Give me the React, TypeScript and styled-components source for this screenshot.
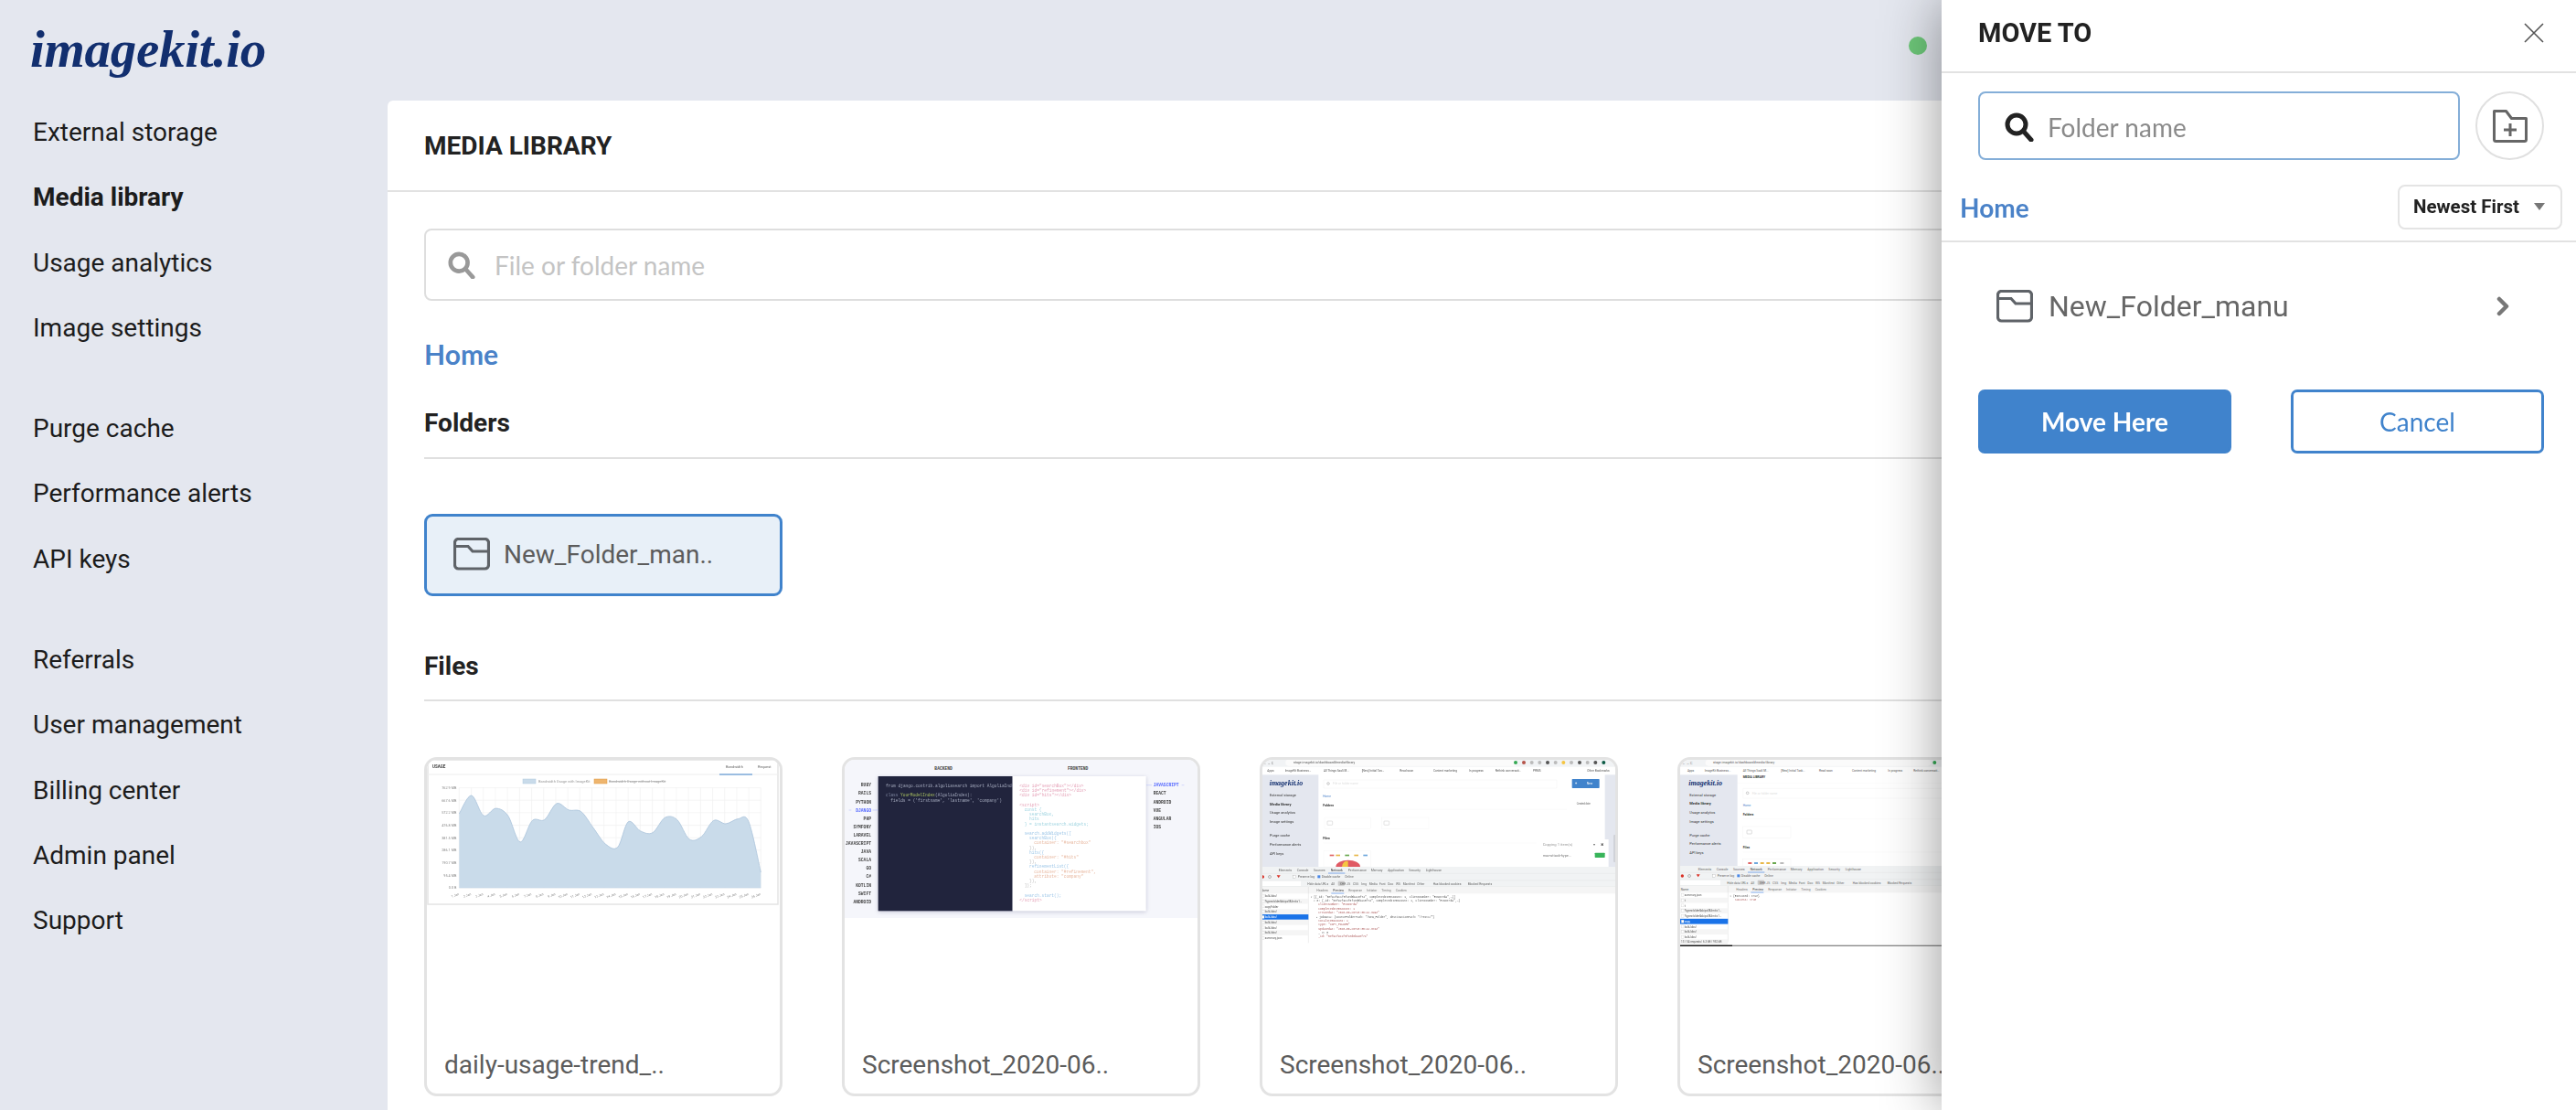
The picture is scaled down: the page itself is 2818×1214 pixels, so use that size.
import React from "react";
import styled, { createGlobalStyle } from "styled-components";

const Global = createGlobalStyle`
  html, body { margin: 0; padding: 0; height: 1214px; overflow: hidden; background: #e4e7ef; }
  * { box-sizing: border-box; }
  body { font-family: Roboto, "Liberation Sans", sans-serif; color: #222; }
`;

const Page = styled.div`
  position: relative;
  display: flex;
  width: 2818px;
  height: 1214px;
  overflow: hidden;
  background: #e4e7ef;
`;
const Sidebar = styled.aside`
  flex: 0 0 424px;
  padding-left: 36px;
`;
const Logo = styled.div`
  height: 109px;
  padding-top: 19px;
  margin-left: -3px;
  font-family: "Liberation Serif", serif;
  font-style: italic;
  font-weight: 700;
  font-size: 57px;
  line-height: 70px;
  letter-spacing: -0.3px;
  color: #122f6f;
`;
const NavGroup = styled.nav`
  margin-bottom: 38.5px;
`;
const NavItem = styled.div<{ $active?: boolean }>`
  height: 71.4px;
  line-height: 71.4px;
  font-size: 28px;
  font-weight: ${(p) => (p.$active ? 700 : 400)};
  color: #1c1c1c;
`;
const Main = styled.main`
  flex: 1;
  padding-top: 110px;
  min-width: 0;
`;
const Card = styled.section`
  background: #fff;
  border-radius: 6px 0 0 0;
  height: 1104px;
  overflow: hidden;
`;
const CardHeader = styled.header`
  height: 100px;
  padding-left: 40px;
  border-bottom: 2px solid #e2e2e2;
  display: flex;
  align-items: center;
  font-weight: 700;
  font-size: 28px;
  color: #222;
`;
const CardBody = styled.div`
  padding: 40px 40px 0;
`;
const SearchBox = styled.div`
  height: 79px;
  border: 2px solid #dedede;
  border-radius: 8px;
  display: flex;
  align-items: center;
  padding-left: 24px;
  gap: 21px;
  font-family: Lato, sans-serif;
  font-size: 28px;
  color: #c4c4c4;
`;
const Crumb = styled.div<{ $size: number }>`
  font-family: Lato, sans-serif;
  font-weight: 700;
  font-size: ${(p) => p.$size}px;
  color: #4a82c8;
`;
const MainCrumb = styled(Crumb)`
  margin-top: 39px;
  height: 38px;
  line-height: 38px;
`;
const SectionTitle = styled.h2<{ $top: number }>`
  margin: ${(p) => p.$top}px 0 0;
  height: 36px;
  line-height: 36px;
  font-weight: 700;
  font-size: 28px;
  color: #222;
`;
const Rule = styled.div<{ $top: number }>`
  margin-top: ${(p) => p.$top}px;
  height: 2px;
  background: #e0e0e0;
`;
const FolderTile = styled.div`
  margin-top: 60px;
  width: 392px;
  height: 90px;
  border: 3px solid #4083cc;
  border-radius: 9px;
  background: #e8f0f8;
  display: flex;
  align-items: center;
  padding: 0 0 2px 29px;
  gap: 15px;
  font-size: 28px;
  color: #5c5c5c;
`;
const FileGrid = styled.div`
  margin-top: 61px;
  display: grid;
  grid-template-columns: repeat(5, 392px);
  column-gap: 65px;
`;
const FileCard = styled.article`
  height: 371px;
  border: 3px solid #e3e3e3;
  border-radius: 14px;
  overflow: hidden;
  position: relative;
  background: #fff;
`;
const Thumb = styled.svg`
  display: block;
  width: 386px;
  filter: blur(0.4px);
`;
const FileName = styled.div`
  position: absolute;
  left: 19px;
  bottom: 13px;
  font-size: 28px;
  line-height: 36px;
  color: #5c5c5c;
  white-space: nowrap;
`;
const StatusDot = styled.div`
  position: absolute;
  left: 2088px;
  top: 40px;
  width: 20px;
  height: 20px;
  border-radius: 50%;
  background: #6ec87a;
`;
const Panel = styled.aside`
  position: absolute;
  top: 0;
  right: 0;
  bottom: 0;
  width: 694px;
  background: #fff;
  box-shadow: 0 0 60px rgba(0, 0, 0, 0.42);
`;
const PanelHeader = styled.header`
  height: 80px;
  padding: 0 34px 6px 40px;
  border-bottom: 2px solid #e2e2e2;
  display: flex;
  align-items: center;
  justify-content: space-between;
  font-weight: 700;
  font-size: 29px;
  color: #222;
`;
const PanelSearchRow = styled.div`
  display: flex;
  gap: 17px;
  padding: 20px 35px 0 40px;
`;
const PanelSearch = styled.div`
  flex: 1;
  height: 75px;
  border: 2px solid #84aed8;
  border-radius: 8px;
  display: flex;
  align-items: center;
  padding: 2px 0 0 27px;
  gap: 15px;
  font-family: Lato, sans-serif;
  font-size: 28px;
  color: #8a8a8a;
`;
const CircleButton = styled.div`
  flex: 0 0 75px;
  height: 75px;
  border: 2px solid #e0e0e0;
  border-radius: 50%;
  display: flex;
  align-items: center;
  justify-content: center;
`;
const PanelToolbar = styled.div`
  height: 90px;
  padding: 27px 15px 13px 20px;
  border-bottom: 2px solid #e2e2e2;
  display: flex;
  align-items: center;
  justify-content: space-between;
`;
const PanelCrumb = styled(Crumb)`
  padding-top: 2px;
`;
const SortSelect = styled.div`
  width: 180px;
  height: 49px;
  border: 2px solid #e4e4e4;
  border-radius: 8px;
  display: flex;
  align-items: center;
  justify-content: space-between;
  padding: 0 17px 0 15px;
  font-size: 20.500px;
  font-weight: 700;
  color: #222;
`;
const Caret = styled.span`
  width: 0;
  height: 0;
  border-left: 6px solid transparent;
  border-right: 6px solid transparent;
  border-top: 8px solid #777;
`;
const FolderRow = styled.div`
  height: 140px;
  padding: 0 73px 0 60px;
  display: flex;
  align-items: center;
  gap: 17px;
  font-size: 32px;
  color: #666;
`;
const FolderLabel = styled.span`
  flex: 1;
`;
const ButtonRow = styled.div`
  display: flex;
  justify-content: space-between;
  padding: 21px 35px 0 40px;
`;
const Button = styled.div<{ $primary?: boolean }>`
  width: 277px;
  height: 70px;
  border-radius: 7px;
  border: 3px solid #4083cc;
  background: ${(p) => (p.$primary ? "#4083cc" : "#fff")};
  color: ${(p) => (p.$primary ? "#fff" : "#4083cc")};
  font-family: Lato, sans-serif;
  font-size: 28px;
  font-weight: ${(p) => (p.$primary ? 700 : 400)};
  display: flex;
  align-items: center;
  justify-content: center;
`;

const FolderIcon = () => (
  <svg width="40" height="36" viewBox="0 0 40 36" fill="none" stroke="#5f6368" strokeWidth="3.200">
    <path d="M1.500 6a4 4 0 0 1 4-4.500h29a4 4 0 0 1 4 4.500v24a4 4 0 0 1-4 4h-29a4 4 0 0 1-4-4z" />
    <path d="M1.500 9.500H16l5 5.500h17.500" />
  </svg>
);
const SearchIcon = ({ color, size }: { color: string; size: number }) => (
  <svg width={size} height={size} viewBox="0 0 32 32" fill="none" stroke={color}>
    <circle cx="13" cy="13" r="10" strokeWidth="5" />
    <path d="M20.500 20.500L29 30" strokeWidth="5" strokeLinecap="round" />
  </svg>
);
const NewFolderIcon = () => (
  <svg width="38" height="36" viewBox="0 0 38 36" fill="none" stroke="#666" strokeWidth="3">
    <path d="M1.500 1.500h13l6 8h16v23a2 2 0 0 1-2 2h-31a2 2 0 0 1-2-2z" strokeLinejoin="round" />
    <path d="M19 15v14M12 22h14" />
  </svg>
);
const CloseIcon = () => (
  <svg width="24" height="24" viewBox="0 0 24 24" stroke="#555" strokeWidth="1.600">
    <path d="M2 2l20 20M22 2L2 22" />
  </svg>
);
const ChevronIcon = () => (
  <svg width="14" height="22" viewBox="0 0 14 22" fill="none" stroke="#777" strokeWidth="4.500" strokeLinecap="round" strokeLinejoin="round">
    <path d="M3 3l8 8-8 8" />
  </svg>
);

type Txt = [number, number, string, number?, string?, number?];
const Texts = ({ items, family = "Roboto, sans-serif", anchor }: { items: Txt[]; family?: string; anchor?: "end" }) => (
  <>
    {items.map(([x, y, t, s = 11, c = "#555", w = 400], i) => (
      <text key={i} x={x} y={y} fontSize={s} fill={c} fontWeight={w} fontFamily={family} textAnchor={anchor}>
        {t}
      </text>
    ))}
  </>
);

const chartPts: [number, number][] = [
  [250, 835], [290, 790], [330, 840], [370, 822], [410, 840], [450, 905], [490, 852], [530, 850], [570, 810],
  [610, 826], [650, 830], [690, 870], [730, 910], [770, 918], [805, 855], [845, 878], [885, 882], [925, 845],
  [965, 850], [1005, 898], [1045, 892], [1085, 852], [1125, 860], [1165, 848], [1200, 855], [1240, 980],
].map(([x, y]) => [x / 3 - 48, y / 2.26 - 310.6]);

function smooth(pts: [number, number][]) {
  let d = `M${pts[0][0]} ${pts[0][1]}`;
  for (let i = 0; i < pts.length - 1; i++) {
    const p0 = pts[Math.max(i - 1, 0)];
    const p1 = pts[i];
    const p2 = pts[i + 1];
    const p3 = pts[Math.min(i + 2, pts.length - 1)];
    d += `C${p1[0] + (p2[0] - p0[0]) / 6} ${p1[1] + (p2[1] - p0[1]) / 6} ${p2[0] - (p3[0] - p1[0]) / 6} ${p2[1] - (p3[1] - p1[1]) / 6} ${p2[0]} ${p2[1]}`;
  }
  return d;
}

const ChartThumb = () => {
  const line = smooth(chartPts);
  const base = 1018 / 2.26 - 310.6;
  const left = chartPts[0][0];
  const right = chartPts[chartPts.length - 1][0];
  const yLabels = ["762.9 MB", "667.6 MB", "572.2 MB", "476.8 MB", "381.5 MB", "286.1 MB", "190.7 MB", "95.4 MB", "0.0 B"];
  const top = 771 / 2.26 - 310.6;
  const step = (base - top) / 8;
  const xStep = (right - left) / 25;
  return (
    <Thumb viewBox="0 0 386 160" height="160">
      <rect x="0" y="0" width="386" height="160" fill="#fff" />
      <rect x="1" y="0" width="383" height="158" fill="#fff" stroke="#e4e4e4" strokeWidth="1.500" />
      <path d="M1 16h383" stroke="#eee" />
      <text x="6" y="9" fontSize="4.500" fontWeight="700" fill="#444" fontFamily="Roboto">USAGE</text>
      <text x="327" y="9" fontSize="4" fill="#666" fontFamily="Roboto">Bandwidth</text>
      <text x="362" y="9" fontSize="4" fill="#666" fontFamily="Roboto">Request</text>
      <path d="M320 16h36" stroke="#4083cc" />
      <rect x="105" y="21" width="14" height="5" fill="#c9dbea" stroke="#b2cbe0" strokeWidth=".5" />
      <text x="122" y="25" fontSize="4" fill="#999" fontFamily="Roboto">Bandwidth Usage with ImageKit</text>
      <rect x="183" y="21" width="14" height="5" fill="#eeb56e" stroke="#e09a44" strokeWidth=".5" />
      <text x="199" y="25" fontSize="4" fill="#999" fontFamily="Roboto" textDecoration="line-through">Bandwidth Usage without ImageKit</text>
      {yLabels.map((l, i) => (
        <g key={l}>
          <text x={left - 3} y={top + i * step + 1.500} fontSize="3.800" fill="#888" textAnchor="end" fontFamily="Roboto">{l}</text>
          <path d={`M${left} ${top + i * step}H${right}`} stroke="#f0f0f0" strokeWidth=".7" />
        </g>
      ))}
      {chartPts.map((_, i) => (
        <g key={i}>
          <path d={`M${left + i * xStep} ${top}V${base}`} stroke="#f0f0f0" strokeWidth=".7" />
          <text
            transform={`translate(${left + i * xStep} ${base + 8}) rotate(-20)`}
            fontSize="3.500"
            fill="#888"
            textAnchor="end"
            fontFamily="Roboto"
          >
            {i + 1} Jan
          </text>
        </g>
      ))}
      <path d={`${line}L${right} ${base}L${left} ${base}Z`} fill="#c9dbea" />
      <path d={line} fill="none" stroke="#a9c3da" strokeWidth=".8" />
      <path d={`M${left} ${base}H${right}`} stroke="#b9cfe2" strokeWidth=".7" />
    </Thumb>
  );
};

const leftLangs = ["RUBY", "RAILS", "PYTHON", "DJANGO", "PHP", "SYMFONY", "LARAVEL", "JAVASCRIPT", "JAVA", "SCALA", "GO", "C#", "KOTLIN", "SWIFT", "ANDROID"];
const rightLangs = ["JAVASCRIPT", "REACT", "ANDROID", "VUE", "ANGULAR", "IOS"];
const frontCode: Txt[] = [
  [642, 176, '<div id="searchBox"></div>', 13.5, "#e5a2b8"],
  [642, 191, '<div id="refinement"></div>', 13.5, "#e5a2b8"],
  [642, 207, '<div id="hits"></div>', 13.5, "#e5a2b8"],
  [642, 238, "<script>", 13.5, "#e5a2b8"],
  [658, 254, "const {", 13.5, "#9fd4e0"],
  [674, 270, "searchBox,", 13.5, "#9fd4e0"],
  [674, 285, "hits", 13.5, "#9fd4e0"],
  [658, 301, "} = instantsearch.widgets;", 13.5, "#9fd4e0"],
  [658, 332, "search.addWidgets([", 13.5, "#a0c8e8"],
  [674, 347, "searchBox({", 13.5, "#a0c8e8"],
  [690, 363, 'container: "#searchbox"', 13.5, "#e8b8a0"],
  [674, 379, "}),", 13.5, "#bbb"],
  [674, 394, "hits({", 13.5, "#a0c8e8"],
  [690, 410, 'container: "#hits"', 13.5, "#e8b8a0"],
  [674, 425, "}),", 13.5, "#bbb"],
  [674, 441, "refinementList({", 13.5, "#a0c8e8"],
  [690, 457, 'container: "#refinement",', 13.5, "#e8b8a0"],
  [690, 472, 'attribute: "company"', 13.5, "#e8b8a0"],
  [674, 488, "}),", 13.5, "#bbb"],
  [658, 503, "]);", 13.5, "#bbb"],
  [658, 535, "search.start();", 13.5, "#a0c8e8"],
  [642, 550, "</script>", 13.5, "#e5a2b8"],
];

const CodeThumb = () => (
  <Thumb viewBox="68 86 1158 519" height="173">
    <rect x="60" y="80" width="1180" height="530" fill="#f5f6fb" />
    <Texts family="Liberation Mono, monospace" items={[[363, 120, "BACKEND", 14, "#444", 700], [800, 120, "FRONTEND", 14, "#444", 700]]} />
    <g style={{ filter: "drop-shadow(0 3px 6px rgba(60,60,110,.25))" }}>
      <rect x="178" y="140" width="441" height="442" fill="#21243d" />
      <rect x="619" y="140" width="438" height="442" fill="#fff" />
    </g>
    <Texts
      family="Liberation Mono, monospace"
      anchor="end"
      items={leftLangs.map((l, i) => [155, 174 + i * 27.300, l, 14, l === "DJANGO" ? "#5468ff" : "#444", 700] as Txt)}
    />
    <path d="M82 251h8M160 251h18" stroke="#8f9bff" strokeWidth="1" />
    <Texts
      family="Liberation Mono, monospace"
      items={rightLangs.map((l, i) => [1081, 174 + i * 27.300, l, 14, l === "JAVASCRIPT" ? "#5468ff" : "#444", 700] as Txt)}
    />
    <path d="M1058 169h18M1174 169h8" stroke="#8f9bff" strokeWidth="1" />
    <clipPath id="dark">
      <rect x="178" y="140" width="441" height="442" />
    </clipPath>
    <g clipPath="url(#dark)">
      <Texts
        family="Liberation Mono, monospace"
        items={[
          [203, 176, "from django.contrib.algoliasearch import AlgoliaIndex", 13.5, "#a4aabd"],
          [203, 207, "class", 13.5, "#7f86a0"],
          [251, 207, "YourModelIndex", 13.5, "#a8c060"],
          [365, 207, "(AlgoliaIndex):", 13.5, "#a4aabd"],
          [219, 223, "fields = ('firstname', 'lastname', 'company')", 13.5, "#a4aabd"],
        ]}
      />
    </g>
    <Texts family="Liberation Mono, monospace" items={frontCode} />
  </Thumb>
);

const navItems = ["External storage", "Media library", "Usage analytics", "Image settings", "Purge cache", "Performance alerts", "API keys"];
const dtTabs = ["Elements", "Console", "Sources", "Network", "Performance", "Memory", "Application", "Security", "Lighthouse"];
const dtTabX = [117, 177, 232, 288, 345, 420, 476, 545, 600];
const filterItems: [number, string][] = [
  [212, "Hide data URLs"], [290, "All"], [318, "XHR"], [341, "JS"], [361, "CSS"], [389, "Img"], [414, "Media"], [448, "Font"],
  [476, "Doc"], [502, "WS"], [525, "Manifest"], [572, "Other"], [624, "Has blocked cookies"], [738, "Blocked Requests"],
];
const subTabs: [number, string][] = [[242, "Headers"], [296, "Preview"], [347, "Response"], [406, "Initiator"], [455, "Timing"], [501, "Cookies"]];

const DevTools = ({ dx, dy }: { dx: number; dy: number }) => (
  <g transform={`translate(${dx} ${dy})`}>
    <rect x="55" y="440" width="1180" height="66" fill="#f1f3f4" />
    <path d="M55 462h1180M55 484h1180M55 506h1180" stroke="#ddd" />
    <Texts items={dtTabs.map((t, i) => [dtTabX[i], 455, t, 10.500, i === 3 ? "#333" : "#666"] as Txt)} />
    <path d="M280 461h55" stroke="#4a88e8" strokeWidth="2" />
    <circle cx="65" cy="473" r="5" fill="#d93025" />
    <circle cx="88" cy="473" r="4.500" fill="none" stroke="#777" strokeWidth="1.500" />
    <path d="M111 468h12l-6 9z" fill="#d93025" />
    <Texts
      items={[
        [180, 477, "Preserve log", 10, "#666"],
        [258, 477, "Disable cache", 10, "#666"],
        [335, 477, "Online", 10, "#666"],
        [62, 499, "Filter", 9, "#aaa"],
      ]}
    />
    <rect x="165" y="468" width="9" height="9" fill="#fff" stroke="#aaa" />
    <rect x="245" y="468" width="9" height="9" fill="#4a88e8" />
    <rect x="55" y="487" width="135" height="16" fill="#fff" />
    <rect x="312" y="487" width="22" height="15" rx="3" fill="#c9c9c9" />
    <Texts items={filterItems.map(([x, t]) => [x, 499, t, 10, "#666"] as Txt)} />
    <rect x="55" y="506" width="1180" height="22" fill="#f5f5f5" />
    <text x="60" y="520" fontSize="9.500" fill="#555" fontFamily="Roboto">Name</text>
    <Texts items={subTabs.map(([x, t]) => [x, 520, t, 10, t === "Preview" ? "#333" : "#777"] as Txt)} />
    <path d="M290 527h42" stroke="#4a88e8" strokeWidth="2" />
  </g>
);

const RequestList = ({ dx, dy, names, sel }: { dx: number; dy: number; names: string[]; sel: number }) => (
  <g transform={`translate(${dx} ${dy})`}>
    <path d="M215 506v184" stroke="#ccc" />
    {names.map((n, i) => {
      const y = 527 + i * 17.300;
      return (
        <g key={i}>
          {i === sel && <rect x="55" y={y} width="160" height="17.300" fill="#1a73e8" />}
          {i % 2 === 1 && i !== sel && <rect x="55" y={y} width="160" height="17.300" fill="#f5f5f5" />}
          <rect x="62" y={y + 4} width="8" height="9" fill="#fff" stroke="#ccc" />
          <text x="72" y={y + 12} fontSize="9" fill={i === sel ? "#fff" : "#555"} fontFamily="Roboto">{n}</text>
        </g>
      );
    })}
  </g>
);

const BrowserThumbA = () => (
  <Thumb viewBox="64 89 1158 612" height="204">
    <rect x="55" y="80" width="1180" height="620" fill="#fff" />
    <rect x="55" y="80" width="1180" height="32" fill="#f1f3f5" />
    <rect x="140" y="88" width="760" height="21" rx="10" fill="#fbfbfb" />
    <Texts
      items={[
        [66, 103, "← → C", 11, "#777"],
        [166, 102, "stage.imagekit.io/dashboard#media-library", 10.500, "#555"],
        [80, 128, "Apps", 9.500], [138, 128, "ImageKit Business...", 9.500], [265, 128, "All Things SaaS M...", 9.500],
        [390, 128, "[New] Initial Tas...", 9.500], [515, 128, "Read soon", 9.500], [625, 128, "Content marketing", 9.500],
        [742, 128, "In progress", 9.500], [828, 128, "Rethink conversati...", 9.500], [952, 128, "PRMS", 9.500],
        [1130, 128, "Other Bookmarks", 9.500],
      ]}
    />
    {[[895, "#34a853"], [922, "#b5544a"], [948, "#bbb"], [974, "#bbb"], [1000, "#555"], [1026, "#bbb"], [1052, "#f5c542"], [1078, "#bbb"], [1105, "#555"], [1131, "#bbb"], [1157, "#555"], [1184, "#0d5c46"]].map(([x, c]) => (
      <circle key={x} cx={x as number} cy="98" r="6" fill={c as string} />
    ))}
    <rect x="55" y="138" width="193" height="302" fill="#e4e7ef" />
    <rect x="1188" y="138" width="47" height="302" fill="#e4e7ef" />
    <text x="87" y="173" fontFamily="Liberation Serif" fontStyle="italic" fontWeight="700" fontSize="24" fill="#122f6f">imagekit.io</text>
    {navItems.map((n, i) => (
      <text key={n} x="88" y={[208, 238, 267, 297, 342, 371, 401][i]} fontSize="12" fontWeight={i === 1 ? 700 : 400} fill="#333" fontFamily="Roboto">{n}</text>
    ))}
    <rect x="265" y="155" width="765" height="27" fill="#fff" stroke="#eee" />
    <circle cx="280" cy="167" r="4" fill="none" stroke="#999" strokeWidth="1.500" />
    <rect x="1080" y="152" width="90" height="30" rx="2" fill="#4083cc" />
    <Texts
      items={[
        [295, 171, "File or folder name", 10, "#ddd"],
        [1090, 171, "+", 12, "#fff", 700],
        [1128, 171, "New", 10, "#fff"],
        [263, 212, "Home", 9.500, "#4a82c8"],
        [263, 243, "Folders", 10.500, "#333", 700],
        [1095, 237, "Created date", 8, "#666"],
        [263, 351, "Files", 10.500, "#333", 700],
        [302, 300, "Test1", 10, "#aaa"],
        [487, 300, "New_Folder", 10, "#aaa"],
      ]}
    />
    <rect x="268" y="278" width="152" height="37" fill="#fff" stroke="#f0f0f0" />
    <rect x="455" y="278" width="155" height="37" fill="#fff" stroke="#f0f0f0" />
    <rect x="277" y="290" width="17" height="13" rx="2" fill="none" stroke="#aaa" />
    <rect x="463" y="290" width="17" height="13" rx="2" fill="none" stroke="#aaa" />
    <path d="M263 252h800M263 362h700" stroke="#f2f2f2" />
    <rect x="265" y="388" width="155" height="52" fill="#fff" stroke="#f0f0f0" />
    <path d="M305 440a40 22 0 0 1 80 0z" fill="#e05a64" />
    <path d="M325 440a16 20 0 0 1 20 -18v18z" fill="#f5c542" />
    {[285, 305, 335, 365, 395].map((x, i) => (
      <rect key={x} x={x} y="400" width="14" height="5" fill={["#e06666", "#e8b84a", "#6aa84f", "#e8b84a", "#6fa8dc"][i]} />
    ))}
    <rect x="968" y="350" width="232" height="90" fill="#fff" />
    <Texts
      items={[
        [984, 372, "Copying 1 item(s)", 12.500, "#999"],
        [984, 406, "max-attack-hype...", 11.500, "#777"],
        [1150, 372, "▾", 12, "#666"],
        [1174, 372, "✖", 11, "#444"],
      ]}
    />
    <rect x="1155" y="394" width="33" height="16" rx="2" fill="#38b45a" />
    <rect x="1216" y="335" width="8" height="90" rx="3" fill="#d0d2d8" />
    <DevTools dx={0} dy={0} />
    <RequestList
      dx={0}
      dy={0}
      sel={4}
      names={["bulkJobs/", "?type=folder&skip=0&limit=1...", "copyFolder", "bulkJobs/", "bulkJobs/", "bulkJobs/", "bulkJobs/", "bulkJobs/", "summary.json"]}
    />
    <Texts
      family="Liberation Mono, monospace"
      items={[
        [222, 541, '▾ [{_id: "5ef92f9c1f5f1ed8ba18f74", completedItemsCount: 1, clientNumber: "ESNOtrdA",…}]', 9, "#555"],
        [232, 554, '▾ 0: {_id: "5ef92f9c1f5f1ed8ba18f74", completedItemsCount: 1, clientNumber: "ESNOtrdA",…}', 9, "#555"],
        [248, 567, 'clientNumber: "ESNOtrdA"', 9, "#a55"],
        [248, 580, "completedItemsCount: 1", 9, "#a55"],
        [248, 593, 'createdAt: "2020-06-26T18:30:44.349Z"', 9, "#a55"],
        [240, 607, '▸ jobData: {sourceFolderPath: "/New_Folder", destinationPath: "/Test1/"}', 9, "#555"],
        [248, 620, "totalItemsCount: 1", 9, "#a55"],
        [248, 633, 'type: "COPY_FOLDER"', 9, "#a55"],
        [248, 646, 'updatedAt: "2020-06-26T18:30:44.374Z"', 9, "#a55"],
        [248, 659, "__v: 0", 9, "#555"],
        [248, 672, '_id: "5ef92f9c1f5f1ed8ba18f74"', 9, "#a55"],
      ]}
    />
  </Thumb>
);

const BrowserThumbB = () => (
  <Thumb viewBox="82 89 1158 624" height="208">
    <rect x="73" y="80" width="1300" height="640" fill="#fff" />
    <rect x="73" y="80" width="1300" height="32" fill="#f1f3f5" />
    <rect x="165" y="88" width="740" height="21" rx="10" fill="#fbfbfb" />
    <Texts
      items={[
        [88, 103, "← → C", 11, "#777"],
        [190, 102, "stage.imagekit.io/dashboard#media-library", 10.500, "#555"],
        [106, 128, "Apps", 9.500], [162, 128, "ImageKit Business...", 9.500], [288, 128, "All Things SaaS M...", 9.500],
        [413, 128, "[New] Initial Task...", 9.500], [538, 128, "Read soon", 9.500], [646, 128, "Content marketing", 9.500],
        [764, 128, "In progress", 9.500], [848, 128, "Rethink conversati...", 9.500],
      ]}
    />
    <circle cx="917" cy="98" r="6" fill="#34a853" />
    <rect x="73" y="138" width="197" height="300" fill="#e4e7ef" />
    <text x="110" y="173" fontFamily="Liberation Serif" fontStyle="italic" fontWeight="700" fontSize="24" fill="#122f6f">imagekit.io</text>
    {navItems.map((n, i) => (
      <text key={n} x="113" y={[208, 237, 266, 296, 340, 369, 398][i]} fontSize="12" fontWeight={i === 1 ? 700 : 400} fill="#333" fontFamily="Roboto">{n}</text>
    ))}
    <Texts
      items={[
        [288, 149, "MEDIA LIBRARY", 10, "#333", 700],
        [318, 203, "File or folder name", 10, "#ddd"],
        [288, 243, "Home", 9.500, "#4a82c8"],
        [288, 273, "Folders", 10.500, "#333", 700],
        [323, 330, "New_Folder", 10, "#aaa"],
        [288, 380, "Files", 10.500, "#333", 700],
      ]}
    />
    <path d="M270 166h1000M288 283h900M288 392h900" stroke="#f2f2f2" />
    <rect x="288" y="183" width="900" height="32" rx="2" fill="none" stroke="#eee" />
    <circle cx="303" cy="198" r="4" fill="none" stroke="#999" strokeWidth="1.500" />
    <rect x="288" y="308" width="157" height="37" fill="#fff" stroke="#eee" />
    <rect x="301" y="320" width="16" height="12" rx="2" fill="none" stroke="#999" />
    <rect x="288" y="415" width="157" height="24" fill="#fff" stroke="#eee" />
    {[305, 325, 345, 365, 385, 410].map((x, i) => (
      <rect key={x} x={x} y="425" width="12" height="6" fill={["#e06666", "#6fa8dc", "#e8b84a", "#e8b84a", "#6aa84f", "#bbb"][i]} />
    ))}
    <DevTools dx={24} dy={-3} />
    <RequestList dx={24} dy={-3} sel={5} names={["summary.json", "t", "t", "?type=folder&skip=0&limit=1...", "?type=folder&skip=0&limit=1...", "copy", "bulkJobs/", "bulkJobs/", "bulkJobs/"]} />
    <rect x="78" y="678" width="160" height="18" fill="#f5f5f5" />
    <text x="85" y="690" fontSize="9" fill="#555" fontFamily="Roboto">13 / 54 requests | 6.3 kB / 952 kB</text>
    <Texts
      family="Liberation Mono, monospace"
      items={[
        [245, 538, "▾ {Executed: true}", 9, "#555"],
        [262, 551, "success: true", 9, "#a55"],
      ]}
    />
    <rect x="78" y="697" width="1300" height="5" fill="#888" />
    <rect x="78" y="697" width="175" height="5" fill="#111" />
  </Thumb>
);

const files = [
  { name: "daily-usage-trend_..", thumb: <ChartThumb /> },
  { name: "Screenshot_2020-06..", thumb: <CodeThumb /> },
  { name: "Screenshot_2020-06..", thumb: <BrowserThumbA /> },
  { name: "Screenshot_2020-06..", thumb: <BrowserThumbB /> },
];

export default function App() {
  return (
    <Page>
      <Global />
      <Sidebar>
        <Logo>imagekit.io</Logo>
        <NavGroup>
          <NavItem>External storage</NavItem>
          <NavItem $active>Media library</NavItem>
          <NavItem>Usage analytics</NavItem>
          <NavItem>Image settings</NavItem>
        </NavGroup>
        <NavGroup>
          <NavItem>Purge cache</NavItem>
          <NavItem>Performance alerts</NavItem>
          <NavItem>API keys</NavItem>
        </NavGroup>
        <NavGroup>
          <NavItem>Referrals</NavItem>
          <NavItem>User management</NavItem>
          <NavItem>Billing center</NavItem>
          <NavItem>Admin panel</NavItem>
          <NavItem>Support</NavItem>
        </NavGroup>
      </Sidebar>
      <Main>
        <Card>
          <CardHeader>MEDIA LIBRARY</CardHeader>
          <CardBody>
            <SearchBox>
              <SearchIcon color="#999" size={30} />
              File or folder name
            </SearchBox>
            <MainCrumb $size={30}>Home</MainCrumb>
            <SectionTitle $top={39}>Folders</SectionTitle>
            <Rule $top={19} />
            <FolderTile>
              <FolderIcon />
              New_Folder_man..
            </FolderTile>
            <SectionTitle $top={59}>Files</SectionTitle>
            <Rule $top={18} />
            <FileGrid>
              {files.map((f, i) => (
                <FileCard key={i}>
                  {f.thumb}
                  <FileName>{f.name}</FileName>
                </FileCard>
              ))}
            </FileGrid>
          </CardBody>
        </Card>
      </Main>
      <StatusDot />
      <Panel>
        <PanelHeader>
          MOVE TO
          <CloseIcon />
        </PanelHeader>
        <PanelSearchRow>
          <PanelSearch>
            <SearchIcon color="#222" size={32} />
            Folder name
          </PanelSearch>
          <CircleButton>
            <NewFolderIcon />
          </CircleButton>
        </PanelSearchRow>
        <PanelToolbar>
          <PanelCrumb $size={28}>Home</PanelCrumb>
          <SortSelect>
            Newest First
            <Caret />
          </SortSelect>
        </PanelToolbar>
        <FolderRow>
          <FolderIcon />
          <FolderLabel>New_Folder_manu</FolderLabel>
          <ChevronIcon />
        </FolderRow>
        <ButtonRow>
          <Button $primary>Move Here</Button>
          <Button>Cancel</Button>
        </ButtonRow>
      </Panel>
    </Page>
  );
}
